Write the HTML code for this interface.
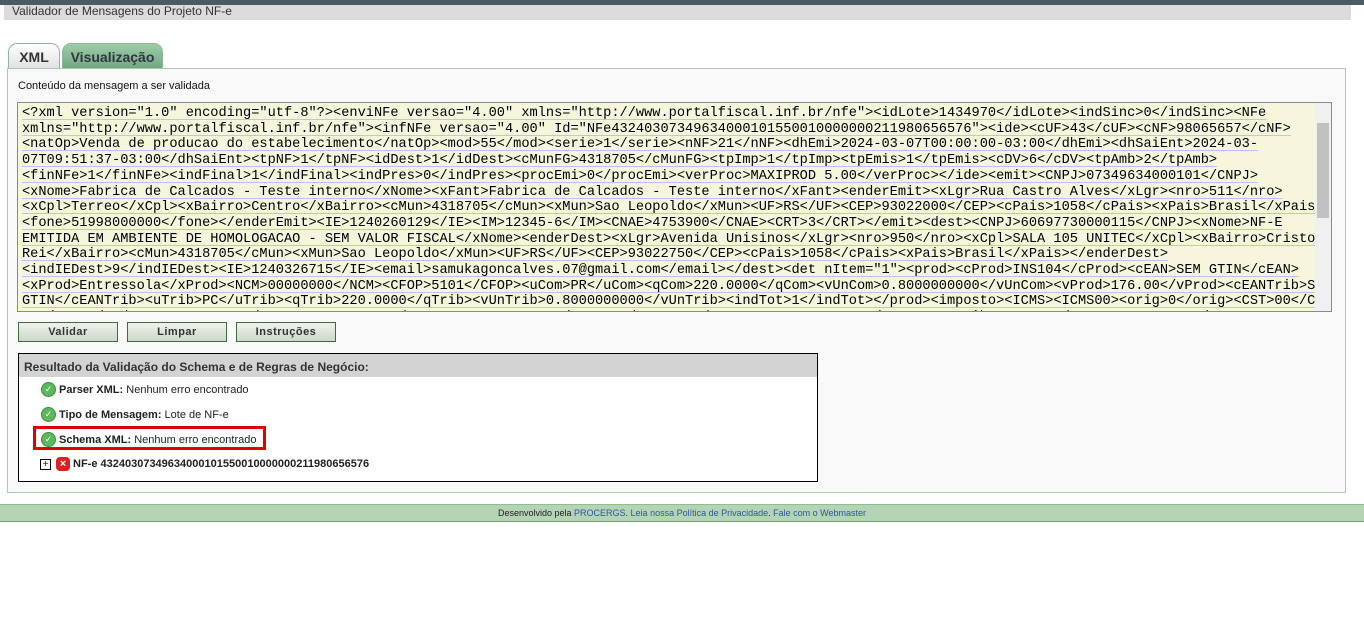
<!DOCTYPE html>
<html><head><meta charset="utf-8"><style>
body{margin:0;width:1364px;height:642px;background:#fff;font-family:"Liberation Sans",Arial,sans-serif;position:relative;overflow:hidden}
.top{position:absolute;left:0;top:0;width:1364px;height:5px;background:#4b5a63}
.hdr{position:absolute;left:4px;top:5px;width:1339px;height:15px;background:#dcdcdc;font-size:12px;color:#333;padding-left:8px;line-height:13px}
.tab{position:absolute;top:43px;height:25px;border:1px solid #8fb89a;border-bottom:none;border-radius:9px 9px 0 0;font-weight:bold;font-size:14px;line-height:26px;text-align:center}
.panel{position:absolute;left:7px;top:68px;width:1337px;height:423px;border:1px solid #a9c9b0;background:#f9f9f9}
.lbl{position:absolute;left:18px;top:80px;font-size:11px;color:#111}
.ta{position:absolute;left:17px;top:102px;width:1313px;height:208px;border:1px solid #8a8a8a;background:#f6f6dc;overflow:hidden}
.ta pre{margin:0;position:absolute;left:4px;top:3px;font-family:"Liberation Mono",monospace;font-size:13.65px;line-height:15.7px;color:#000;text-decoration:underline;text-decoration-color:#c7bff0;text-underline-offset:3px}
.sb{position:absolute;right:0;top:0;width:16px;height:208px;background:#f0f0f0}
.sb .th{position:absolute;left:2px;top:20px;width:12px;height:95px;background:#c1c1c1}
.btn{position:absolute;top:322px;height:18px;border:1px solid #3f6b3f;background:linear-gradient(#eef2ec,#cdd8cb);font-size:11px;font-weight:bold;color:#333;text-align:center;line-height:18px;letter-spacing:.5px}
.res{position:absolute;left:18px;top:353px;width:798px;height:127px;border:1px solid #000;background:#fff}
.rh{height:23px;background:#d3d3d3;font-size:12px;font-weight:bold;color:#333;line-height:26px;padding-left:5px}
.it{position:absolute;font-size:11px;color:#222;display:flex;align-items:center}
.ok{width:13px;height:13px;border-radius:50%;background:#5cb85c;border:1px solid #3c8c3c;margin-right:3px;color:#fff;font-size:9px;line-height:13px;text-align:center}
.foot{position:absolute;left:0;top:504px;width:1364px;height:16px;background:#b5d3b5;border-top:1px solid #8fbf8f;border-bottom:1px solid #7a9f7a;font-size:9px;text-align:center;line-height:16px;color:#222}
.foot span{color:#2a5aa0}
</style></head><body>
<div class="top"></div>
<div class="hdr">Validador de Mensagens do Projeto NF-e</div>
<div class="tab" style="left:8px;width:50px;background:linear-gradient(#fff,#e0e0e0);color:#333">XML</div>
<div class="tab" style="left:62px;width:99px;background:linear-gradient(#9fcca8,#6fa77f);color:#334">Visualização</div>
<div class="panel"></div>
<div class="lbl">Conteúdo da mensagem a ser validada</div>
<div class="ta"><pre>&lt;?xml version="1.0" encoding="utf-8"?&gt;&lt;enviNFe versao="4.00" xmlns="http://www.portalfiscal.inf.br/nfe"&gt;&lt;idLote&gt;1434970&lt;/idLote&gt;&lt;indSinc&gt;0&lt;/indSinc&gt;&lt;NFe
xmlns="http://www.portalfiscal.inf.br/nfe"&gt;&lt;infNFe versao="4.00" Id="NFe43240307349634000101550010000000211980656576"&gt;&lt;ide&gt;&lt;cUF&gt;43&lt;/cUF&gt;&lt;cNF&gt;98065657&lt;/cNF&gt;
&lt;natOp&gt;Venda de producao do estabelecimento&lt;/natOp&gt;&lt;mod&gt;55&lt;/mod&gt;&lt;serie&gt;1&lt;/serie&gt;&lt;nNF&gt;21&lt;/nNF&gt;&lt;dhEmi&gt;2024-03-07T00:00:00-03:00&lt;/dhEmi&gt;&lt;dhSaiEnt&gt;2024-03-
07T09:51:37-03:00&lt;/dhSaiEnt&gt;&lt;tpNF&gt;1&lt;/tpNF&gt;&lt;idDest&gt;1&lt;/idDest&gt;&lt;cMunFG&gt;4318705&lt;/cMunFG&gt;&lt;tpImp&gt;1&lt;/tpImp&gt;&lt;tpEmis&gt;1&lt;/tpEmis&gt;&lt;cDV&gt;6&lt;/cDV&gt;&lt;tpAmb&gt;2&lt;/tpAmb&gt;
&lt;finNFe&gt;1&lt;/finNFe&gt;&lt;indFinal&gt;1&lt;/indFinal&gt;&lt;indPres&gt;0&lt;/indPres&gt;&lt;procEmi&gt;0&lt;/procEmi&gt;&lt;verProc&gt;MAXIPROD 5.00&lt;/verProc&gt;&lt;/ide&gt;&lt;emit&gt;&lt;CNPJ&gt;07349634000101&lt;/CNPJ&gt;
&lt;xNome&gt;Fabrica de Calcados - Teste interno&lt;/xNome&gt;&lt;xFant&gt;Fabrica de Calcados - Teste interno&lt;/xFant&gt;&lt;enderEmit&gt;&lt;xLgr&gt;Rua Castro Alves&lt;/xLgr&gt;&lt;nro&gt;511&lt;/nro&gt;
&lt;xCpl&gt;Terreo&lt;/xCpl&gt;&lt;xBairro&gt;Centro&lt;/xBairro&gt;&lt;cMun&gt;4318705&lt;/cMun&gt;&lt;xMun&gt;Sao Leopoldo&lt;/xMun&gt;&lt;UF&gt;RS&lt;/UF&gt;&lt;CEP&gt;93022000&lt;/CEP&gt;&lt;cPais&gt;1058&lt;/cPais&gt;&lt;xPais&gt;Brasil&lt;/xPais&gt;
&lt;fone&gt;51998000000&lt;/fone&gt;&lt;/enderEmit&gt;&lt;IE&gt;1240260129&lt;/IE&gt;&lt;IM&gt;12345-6&lt;/IM&gt;&lt;CNAE&gt;4753900&lt;/CNAE&gt;&lt;CRT&gt;3&lt;/CRT&gt;&lt;/emit&gt;&lt;dest&gt;&lt;CNPJ&gt;60697730000115&lt;/CNPJ&gt;&lt;xNome&gt;NF-E
EMITIDA EM AMBIENTE DE HOMOLOGACAO - SEM VALOR FISCAL&lt;/xNome&gt;&lt;enderDest&gt;&lt;xLgr&gt;Avenida Unisinos&lt;/xLgr&gt;&lt;nro&gt;950&lt;/nro&gt;&lt;xCpl&gt;SALA 105 UNITEC&lt;/xCpl&gt;&lt;xBairro&gt;Cristo
Rei&lt;/xBairro&gt;&lt;cMun&gt;4318705&lt;/cMun&gt;&lt;xMun&gt;Sao Leopoldo&lt;/xMun&gt;&lt;UF&gt;RS&lt;/UF&gt;&lt;CEP&gt;93022750&lt;/CEP&gt;&lt;cPais&gt;1058&lt;/cPais&gt;&lt;xPais&gt;Brasil&lt;/xPais&gt;&lt;/enderDest&gt;
&lt;indIEDest&gt;9&lt;/indIEDest&gt;&lt;IE&gt;1240326715&lt;/IE&gt;&lt;email&gt;samukagoncalves.07@gmail.com&lt;/email&gt;&lt;/dest&gt;&lt;det nItem="1"&gt;&lt;prod&gt;&lt;cProd&gt;INS104&lt;/cProd&gt;&lt;cEAN&gt;SEM GTIN&lt;/cEAN&gt;
&lt;xProd&gt;Entressola&lt;/xProd&gt;&lt;NCM&gt;00000000&lt;/NCM&gt;&lt;CFOP&gt;5101&lt;/CFOP&gt;&lt;uCom&gt;PR&lt;/uCom&gt;&lt;qCom&gt;220.0000&lt;/qCom&gt;&lt;vUnCom&gt;0.8000000000&lt;/vUnCom&gt;&lt;vProd&gt;176.00&lt;/vProd&gt;&lt;cEANTrib&gt;SEM
GTIN&lt;/cEANTrib&gt;&lt;uTrib&gt;PC&lt;/uTrib&gt;&lt;qTrib&gt;220.0000&lt;/qTrib&gt;&lt;vUnTrib&gt;0.8000000000&lt;/vUnTrib&gt;&lt;indTot&gt;1&lt;/indTot&gt;&lt;/prod&gt;&lt;imposto&gt;&lt;ICMS&gt;&lt;ICMS00&gt;&lt;orig&gt;0&lt;/orig&gt;&lt;CST&gt;00&lt;/CST&gt;
&lt;modBC&gt;3&lt;/modBC&gt;&lt;vBC&gt;176.00&lt;/vBC&gt;&lt;pICMS&gt;17.00&lt;/pICMS&gt;&lt;vICMS&gt;29.92&lt;/vICMS&gt;&lt;/ICMS00&gt;&lt;/ICMS&gt;&lt;IPI&gt;&lt;cEnq&gt;999&lt;/cEnq&gt;&lt;IPITrib&gt;&lt;CST&gt;50&lt;/CST&gt;&lt;vBC&gt;176.00&lt;/vBC&gt;</pre><div class="sb"><div class="th"></div></div></div>
<div class="btn" style="left:18px;width:98px">Validar</div>
<div class="btn" style="left:127px;width:98px">Limpar</div>
<div class="btn" style="left:236px;width:98px">Instruções</div>
<div class="res"><div class="rh">Resultado da Validação do Schema e de Regras de Negócio:</div></div>
<div class="it" style="left:41px;top:382px"><div class="ok">✓</div><b>Parser XML:</b>&nbsp;Nenhum erro encontrado</div>
<div class="it" style="left:41px;top:407px"><div class="ok">✓</div><b>Tipo de Mensagem:</b>&nbsp;Lote de NF-e</div>
<div style="position:absolute;left:33px;top:426px;width:233px;height:24px;border:3px solid #e00000;box-sizing:border-box"></div>
<div class="it" style="left:41px;top:432px"><div class="ok">✓</div><b>Schema XML:</b>&nbsp;Nenhum erro encontrado</div>
<div class="it" style="left:40px;top:457px"><div style="width:9px;height:9px;border:1px solid #000;font-size:10px;line-height:9px;text-align:center;margin-right:5px">+</div><div style="width:14px;height:14px;background:#e02020;border-radius:4px;color:#fff;font-size:11px;line-height:14px;text-align:center;font-weight:bold;margin-right:3px">×</div><b>NF-e 43240307349634000101550010000000211980656576</b></div>
<div class="foot">Desenvolvido pela <span>PROCERGS</span>. <span>Leia nossa Política de Privacidade</span>. <span>Fale com o Webmaster</span></div>
</body></html>
